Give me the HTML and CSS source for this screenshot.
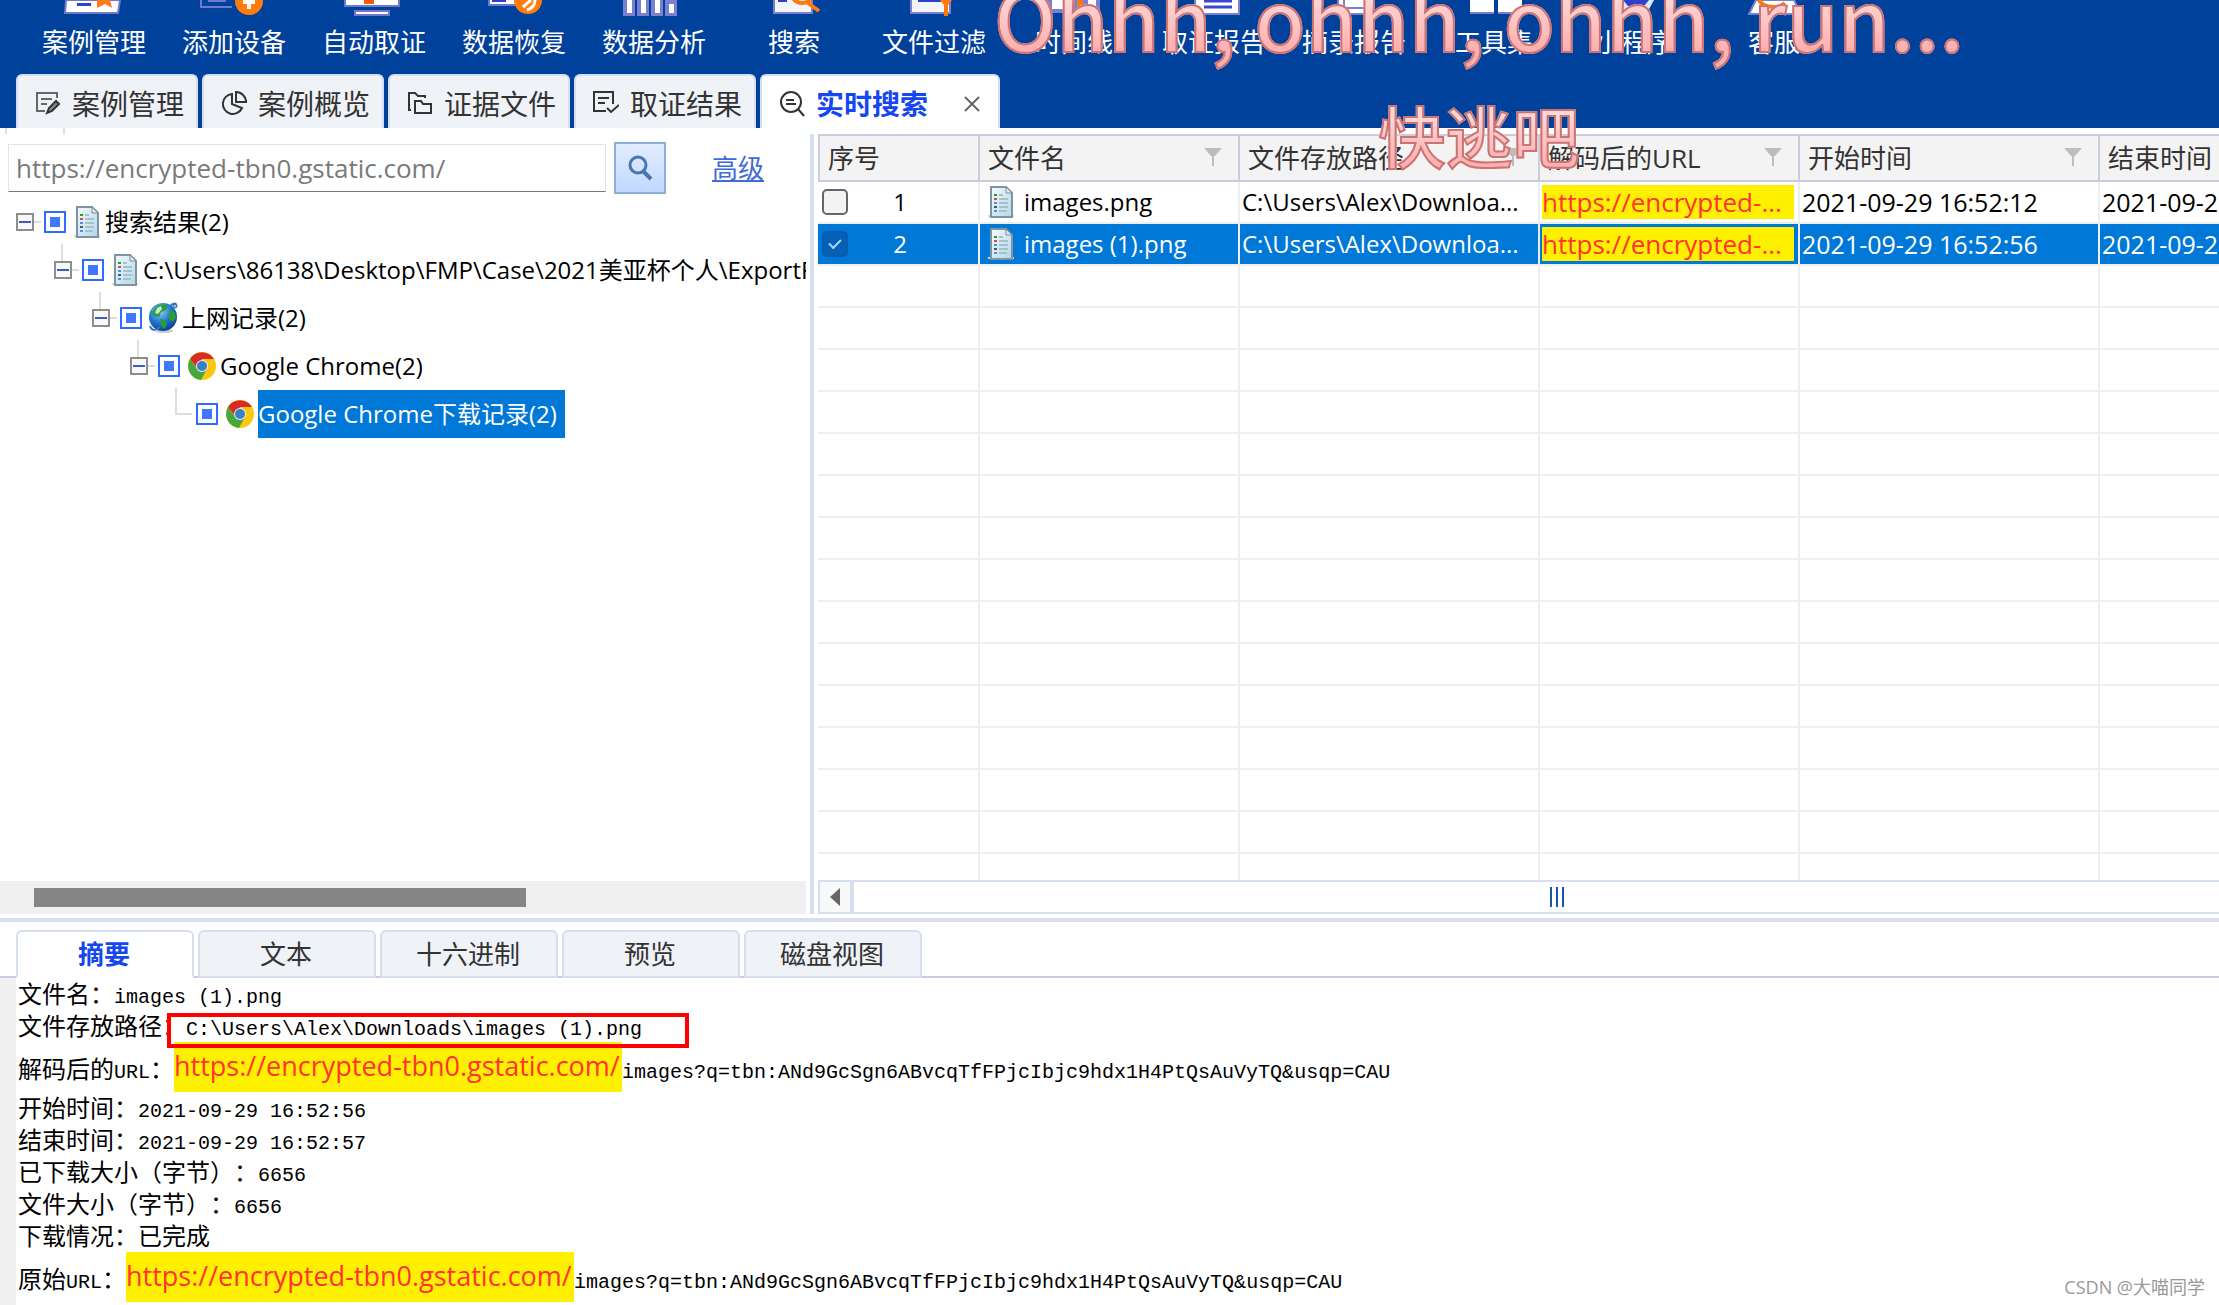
FILE: index.html
```html
<!DOCTYPE html>
<html lang="zh-CN">
<head>
<meta charset="utf-8">
<title>实时搜索</title>
<link rel="stylesheet" href="styles.css">
</head>
<body>
<svg class="defs" width="0" height="0" aria-hidden="true">
  <defs>
    <linearGradient id="paper" x1="0" y1="0" x2="1" y2="1"><stop offset="0" stop-color="#f4fafd"/><stop offset="1" stop-color="#b4d7e8"/></linearGradient>
    <radialGradient id="sea" cx=".4" cy=".3" r=".8"><stop offset="0" stop-color="#8fd0f5"/><stop offset=".5" stop-color="#1f78d0"/><stop offset="1" stop-color="#0a2f8a"/></radialGradient>
  </defs>
  <symbol id="doc" viewBox="0 0 26 32">
    <rect x="0" y="29" width="26" height="2" fill="#d5d9dc"/>
    <path d="M3 1h15l6 6v24H3z" fill="url(#paper)" stroke="#7d94a3" stroke-width="2"/>
    <path d="M18 1v6h6z" fill="#dfeaf1" stroke="#7d8b96"/>
    <path d="M11 9h4M11 13h9M11 17h9M11 21h9M11 25h8" stroke="#a3c3cc" stroke-width="2"/>
    <path d="M6 8h3v2H6z" fill="#1fa01f"/><path d="M6 12h3v2H6z" fill="#d04a4a"/><path d="M6 16h3v2H6zM6 24h3v2H6z" fill="#4a8dff"/><path d="M6 20h3v2H6z" fill="#555"/>
  </symbol>
  <symbol id="globe" viewBox="0 0 30 32">
    <ellipse cx="16" cy="29" rx="9" ry="2" fill="#c9cdd2"/>
    <circle cx="15" cy="15" r="14" fill="url(#sea)"/>
    <path d="M8 5c4-3 9-3 12-1l-2 4-5 2-2 5-5-1-2-3zM20 12l4-4 3 3 1 5-3 4-4-3zM12 17l5 1 2 5-3 4-3-3z" fill="#2c9b3c"/>
    <path d="M9 6l4-2 1 3-4 5-3-1z" fill="#c9f0c0"/>
    <path d="M2 24c2 6 6 4 10 1M22 4c3-3 7-4 6 1" fill="none" stroke="#3779b8" stroke-width="2"/>
    <circle cx="27" cy="4" r="2" fill="#8cc3e8" stroke="#28659e"/>
  </symbol>
  <symbol id="chrome" viewBox="0 0 28 28">
    <circle cx="14" cy="14" r="14" fill="#fbc90c"/>
    <path d="M2 7A14 14 0 0 1 26 7H14L9 16z" fill="#da2a26"/>
    <path d="M2 7A14 14 0 0 0 13 28L19 17H9z" fill="#43a83f"/>
    <circle cx="14" cy="14" r="6" fill="#e4eef6"/><circle cx="14" cy="14" r="5" fill="#3b7fc4"/>
  </symbol>
  <symbol id="funnel" viewBox="0 0 18 18"><path d="M0 0h18l-7 8H10v10H8V8H7z" fill="#bdbdbd"/></symbol>
</svg>

<header class="top">
  <nav class="toolbar" aria-label="工具栏">
    <button class="tool" type="button"><svg viewBox="0 0 60 16"><path d="M1 0L0 13H53L55 0z" transform="translate(1)" fill="#fff" stroke="#6f78cc" stroke-width="2"/><path d="M13 3h14v3H13z" fill="#2f3fd0"/><path d="M33 0h13l2 8-7-4-8 4z" fill="#ff7a1a"/></svg>案例管理</button>
    <button class="tool" type="button"><svg viewBox="0 0 60 16"><path d="M-3 0V7H28" fill="none" stroke="#6f78cc" stroke-width="2"/><path d="M4 1h18" stroke="#6f78cc" stroke-width="2"/><circle cx="45" cy="1" r="14" fill="#ff7d0a"/><path d="M43 0h4v9h-4zM39 0h12v4H39z" fill="#fff"/></svg>添加设备</button>
    <button class="tool" type="button"><svg viewBox="0 0 60 16"><path d="M1-2V6H55V-2z" fill="#fff" stroke="#6f78cc" stroke-width="2"/><path d="M20 0h10v4H20z" fill="#ff5a00"/><path d="M11 11h34v4H11z" fill="#fff" stroke="#6f78cc" stroke-width="2"/></svg>自动取证</button>
    <button class="tool" type="button"><svg viewBox="0 0 60 16"><path d="M5-2V5H34V-2z" fill="#fff" stroke="#6f78cc" stroke-width="2"/><path d="M8 0h14v2H8z" fill="#2f3fd0"/><circle cx="44" cy="0" r="14" fill="#ff7d0a"/><path d="M39 7l8-7M43 10c6-2 8-5 8-10" fill="none" stroke="#fff" stroke-width="3"/></svg>数据恢复</button>
    <button class="tool" type="button"><svg viewBox="0 0 60 16"><path d="M-1 0h12v16H-1zM13 0h12v16H13zM27 0h12v16H27zM41 0h12v16H41z" fill="#7a80cf"/><path d="M3 0h5v13H3zM17 0h5v13h-5zM31 0h5v13h-5zM45 4h5v9h-5z" fill="#fff"/></svg>数据分析</button>
    <button class="tool" type="button"><svg viewBox="0 0 60 16"><path d="M10-2V13H48V-2z" fill="#f4f4fb" stroke="#7a80cf" stroke-width="2"/><path d="M14 0h9v2h-9z" fill="#2f3fd0"/><path d="M29-2a10 9 0 0 0 18 0M44 3l11 8" fill="none" stroke="#ff7a0a" stroke-width="4"/></svg>搜索</button>
    <button class="tool" type="button"><svg viewBox="0 0 60 16"><path d="M7-2V13H46V-2z" fill="#f4f4fb" stroke="#7a80cf" stroke-width="2"/><path d="M14 0h23v2H14z" fill="#2f3fd0"/><path d="M36 0h12l-4 5v11h-4V5z" fill="#ff7a0a"/></svg>文件过滤</button>
    <button class="tool" type="button"><svg viewBox="0 0 60 16"><path d="M2 0h54v13H2z" fill="#7a80cf"/><path d="M8 0h12v9H8zM44 0h8v9h-8z" fill="#fff"/><path d="M33 0h6v6h-6z" fill="#ff7a0a"/></svg>时间线</button>
    <button class="tool" type="button"><svg viewBox="0 0 60 16"><path d="M11-2V14H55V-2z" fill="#fff" stroke="#7a80cf" stroke-width="2"/><path d="M20 1h28M20 7h28" stroke="#3b48d0" stroke-width="3"/></svg>取证报告</button>
    <button class="tool" type="button"><svg viewBox="0 0 60 16"><path d="M14-2V14H50V-2z" fill="#fff" stroke="#7a80cf" stroke-width="2"/><path d="M20 0v8h25V0" fill="none" stroke="#7a80cf" stroke-width="2"/></svg>摘录报告</button>
    <button class="tool" type="button"><svg viewBox="0 0 60 16"><path d="M6 0h24v13H6zM34 0h24v13H34z" fill="#fff"/><path d="M6 13h24M34 13h24" stroke="#7a80cf" stroke-width="2"/></svg>工具集</button>
    <button class="tool" type="button"><svg viewBox="0 0 60 16"><path d="M14 0h36l-7 13-6-5-5 5-5-5-7 5z" fill="#d8e8f6"/><path d="M19 0h26l-5 6H24z" fill="#2f3fd0"/></svg>小程序</button>
    <button class="tool" type="button"><svg viewBox="0 0 60 16"><path d="M12 0L5 14H57L50 0z" fill="#fff" stroke="#7a80cf" stroke-width="2"/><path d="M15 0c4 8 20 9 26 3" fill="none" stroke="#ff7a0a" stroke-width="4"/></svg>客服</button>
  </nav>
  <nav class="tabs" aria-label="页面">
    <button class="tab" type="button"><svg viewBox="0 0 26 26"><path d="M10 20H2V2h20v5" fill="none" stroke="#666" stroke-width="2"/><path d="M6 8h11M6 13h6" stroke="#666" stroke-width="2"/><path d="M12 22l2-5 7-7 3 3-7 7z" fill="#888" stroke="#333" stroke-width="2"/></svg>案例管理</button>
    <button class="tab" type="button"><svg viewBox="0 0 26 26"><path d="M11 3a10 10 0 1 0 10 14l-10-4z" fill="none" stroke="#333" stroke-width="2"/><path d="M15 1v10h10A10 10 0 0 0 15 1z" fill="none" stroke="#333" stroke-width="2"/></svg>案例概览</button>
    <button class="tab" type="button"><svg viewBox="0 0 26 26"><path d="M4 19H2V2h6l3 3h7v2" fill="none" stroke="#333" stroke-width="2"/><path d="M8 10h6l2 3h8v9H8z" fill="none" stroke="#333" stroke-width="2"/></svg>证据文件</button>
    <button class="tab" type="button"><svg viewBox="0 0 26 26"><path d="M13 20H1V1h19v12M5 7h11M5 12h7M14 17l4 4 8-7" fill="none" stroke="#333" stroke-width="2"/></svg>取证结果</button>
    <button class="tab tab-current" type="button" aria-current="page"><svg viewBox="0 0 26 26"><circle cx="12" cy="11" r="10" fill="none" stroke="#333" stroke-width="2"/><path d="M7 9h8M7 13h10M19 18l6 7" stroke="#333" stroke-width="2"/></svg>实时搜索<svg class="close" viewBox="0 0 16 16"><path d="M1 1l14 14M15 1L1 15" stroke="#666" stroke-width="2"/></svg></button>
  </nav>
</header>

<main class="work">
  <section class="side">
    <div class="notch"></div>
    <form class="search">
      <input class="query" type="text" aria-label="搜索内容" value="https://encrypted-tbn0.gstatic.com/">
      <button class="go" type="button" aria-label="搜索"><svg viewBox="0 0 26 26"><circle cx="11" cy="10" r="8" fill="none" stroke="#4c76ae" stroke-width="3"/><path d="M16 16l8 8" stroke="#4c76ae" stroke-width="4"/></svg></button>
      <a class="advanced" href="#">高级</a>
    </form>
    <ul class="tree">
      <li>
        <div class="node"><button class="fold" type="button" aria-label="折叠"></button><input class="part" type="checkbox" id="n1"><svg class="pic"><use href="#doc"/></svg><label for="n1">搜索结果(2)</label></div>
        <ul>
          <li>
            <div class="node"><button class="fold" type="button" aria-label="折叠"></button><input class="part" type="checkbox" id="n2"><svg class="pic"><use href="#doc"/></svg><label for="n2">C:\Users\86138\Desktop\FMP\Case\2021美亚杯个人\ExportFile</label></div>
            <ul>
              <li>
                <div class="node"><button class="fold" type="button" aria-label="折叠"></button><input class="part" type="checkbox" id="n3"><svg class="pic pic-globe"><use href="#globe"/></svg><label for="n3">上网记录(2)</label></div>
                <ul>
                  <li>
                    <div class="node"><button class="fold" type="button" aria-label="折叠"></button><input class="part" type="checkbox" id="n4"><svg class="pic pic-chrome"><use href="#chrome"/></svg><label for="n4">Google Chrome(2)</label></div>
                    <ul>
                      <li>
                        <div class="node leaf"><span class="elbow"></span><input class="part" type="checkbox" id="n5"><svg class="pic pic-chrome"><use href="#chrome"/></svg><label class="chosen" for="n5">Google Chrome下载记录(2)</label></div>
                      </li>
                    </ul>
                  </li>
                </ul>
              </li>
            </ul>
          </li>
        </ul>
      </li>
    </ul>
    <div class="side-scroll"><div class="side-thumb"></div></div>
  </section>
  <div class="splitter"></div>
  <section class="results">
    <div class="grid-view">
      <table class="grid">
        <colgroup><col class="c-num"><col class="c-name"><col class="c-path"><col class="c-url"><col class="c-time"><col class="c-time"></colgroup>
        <thead>
          <tr>
            <th><div class="head">序号</div></th>
            <th><div class="head">文件名<svg class="filter"><use href="#funnel"/></svg></div></th>
            <th><div class="head">文件存放路径<svg class="filter"><use href="#funnel"/></svg></div></th>
            <th><div class="head">解码后的URL<svg class="filter"><use href="#funnel"/></svg></div></th>
            <th><div class="head">开始时间<svg class="filter"><use href="#funnel"/></svg></div></th>
            <th><div class="head">结束时间<svg class="filter"><use href="#funnel"/></svg></div></th>
          </tr>
        </thead>
        <tbody>
          <tr>
            <td><div class="pick"><input class="tick" type="checkbox" id="r1"><label for="r1">1</label></div></td>
            <td><div class="file"><svg class="pic"><use href="#doc"/></svg>images.png</div></td>
            <td>C:\Users\Alex\Downloa...</td>
            <td><mark class="hit">https://encrypted-...</mark></td>
            <td class="when">2021-09-29 16:52:12</td>
            <td class="when">2021-09-29 16:52:13</td>
          </tr>
          <tr class="row-current">
            <td><div class="pick"><input class="tick" type="checkbox" id="r2" checked><label for="r2">2</label></div></td>
            <td><div class="file"><svg class="pic"><use href="#doc"/></svg>images (1).png</div></td>
            <td>C:\Users\Alex\Downloa...</td>
            <td><mark class="hit">https://encrypted-...</mark></td>
            <td class="when">2021-09-29 16:52:56</td>
            <td class="when">2021-09-29 16:52:57</td>
          </tr>
          <tr><td></td><td></td><td></td><td></td><td></td><td></td></tr>
          <tr><td></td><td></td><td></td><td></td><td></td><td></td></tr>
          <tr><td></td><td></td><td></td><td></td><td></td><td></td></tr>
          <tr><td></td><td></td><td></td><td></td><td></td><td></td></tr>
          <tr><td></td><td></td><td></td><td></td><td></td><td></td></tr>
          <tr><td></td><td></td><td></td><td></td><td></td><td></td></tr>
          <tr><td></td><td></td><td></td><td></td><td></td><td></td></tr>
          <tr><td></td><td></td><td></td><td></td><td></td><td></td></tr>
          <tr><td></td><td></td><td></td><td></td><td></td><td></td></tr>
          <tr><td></td><td></td><td></td><td></td><td></td><td></td></tr>
          <tr><td></td><td></td><td></td><td></td><td></td><td></td></tr>
          <tr><td></td><td></td><td></td><td></td><td></td><td></td></tr>
          <tr><td></td><td></td><td></td><td></td><td></td><td></td></tr>
          <tr><td></td><td></td><td></td><td></td><td></td><td></td></tr>
          <tr><td></td><td></td><td></td><td></td><td></td><td></td></tr>
        </tbody>
      </table>
    </div>
    <div class="grid-scroll">
      <button class="scroll-left" type="button" aria-label="向左滚动"><svg viewBox="0 0 10 18"><path d="M10 0v18L0 9z" fill="#666"/></svg></button>
      <div class="track"><span class="grip"></span></div>
    </div>
  </section>
</main>

<section class="detail">
  <nav class="views" aria-label="视图">
    <button class="view view-current" type="button">摘要</button>
    <button class="view" type="button">文本</button>
    <button class="view" type="button">十六进制</button>
    <button class="view" type="button">预览</button>
    <button class="view" type="button">磁盘视图</button>
  </nav>
  <div class="summary">
    <p>文件名：<code>images (1).png</code></p>
    <p class="boxed">文件存放路径：<code>C:\Users\Alex\Downloads\images (1).png</code></p>
    <p class="tall"><span>解码后的<code>URL</code>：</span><mark>https://encrypted-tbn0.gstatic.com/</mark><code>images?q=tbn:ANd9GcSgn6ABvcqTfFPjcIbjc9hdx1H4PtQsAuVyTQ&amp;usqp=CAU</code></p>
    <p>开始时间：<code>2021-09-29 16:52:56</code></p>
    <p>结束时间：<code>2021-09-29 16:52:57</code></p>
    <p>已下载大小（字节）：<code>6656</code></p>
    <p>文件大小（字节）：<code>6656</code></p>
    <p>下载情况：已完成</p>
    <p class="tall"><span>原始<code>URL</code>：</span><mark>https://encrypted-tbn0.gstatic.com/</mark><code>images?q=tbn:ANd9GcSgn6ABvcqTfFPjcIbjc9hdx1H4PtQsAuVyTQ&amp;usqp=CAU</code></p>
  </div>
</section>

<div class="lyrics">
  <div class="lyric">Ohhh, ohhh, ohhh, run...</div>
  <div class="lyric lyric-sub">快逃吧</div>
</div>
<div class="credit">CSDN @大喵同学</div>
</body>
</html>
```
FILE: styles.css
```css
*, *::before, *::after { box-sizing: border-box; }
body {
  margin: 0;
  min-height: 100vh;
  display: flex;
  flex-direction: column;
  position: relative;
  overflow: hidden;
  background: #fff;
  color: #000;
  font: 24px/40px "Open Sans", "Noto Sans CJK SC", sans-serif;
}
button { margin: 0; padding: 0; border: 0; background: none; font: inherit; color: inherit; }
ul { margin: 0; padding: 0; list-style: none; }
.defs { position: absolute; }

/* Top bar */
.top { background: #00419c; }
.toolbar { display: flex; padding-left: 24px; }
.tool {
  flex: 0 0 140px;
  display: flex;
  flex-direction: column;
  align-items: center;
  color: #fff;
  font-size: 26px;
  line-height: 52px;
}
.tool svg { width: 60px; height: 16px; overflow: visible; }
.tabs { display: flex; gap: 4px; padding: 6px 16px 0; }
.tab {
  display: flex;
  align-items: center;
  gap: 11px;
  width: 182px;
  height: 54px;
  padding: 4px 0 0 17px;
  border: 2px solid #d6dff1;
  border-bottom: 0;
  border-radius: 6px 6px 0 0;
  background: #eff2f7;
  color: #333;
  font-size: 28px;
  white-space: nowrap;
}
.tab svg { flex: none; width: 26px; height: 26px; }
.tab-current { width: 240px; background: #fff; color: #1447f0; font-weight: 700; }
.tab .close { width: 16px; height: 16px; margin-left: 25px; }

/* Work area */
.work {
  flex: 1 1 0;
  min-height: 0;
  display: grid;
  grid-template-columns: 806px 12px minmax(0, 1fr);
  padding-bottom: 4px;
}
.side { display: flex; flex-direction: column; min-width: 0; min-height: 0; overflow: hidden; }
.notch { width: 60px; height: 6px; margin-left: 5px; border: solid #d6dff1; border-width: 0 2px; }
.search { display: flex; align-items: center; gap: 8px; padding: 8px 8px 4px; }
.query {
  width: 598px;
  height: 48px;
  padding: 0 7px;
  border: 1px solid #e5e5e5;
  border-bottom-color: #777;
  font: 26px/40px "Open Sans", "Noto Sans CJK SC", sans-serif;
  color: #7a7a7a;
}
.go {
  display: grid;
  place-items: center;
  width: 52px;
  height: 52px;
  border: 2px solid #8fb0d5;
  background: linear-gradient(#e2edff, #c1d9ff);
}
.go svg { width: 26px; height: 26px; }
.advanced { margin-left: 38px; color: #3f6cd8; font-size: 26px; text-underline-offset: 2px; }

.tree { flex: 1; min-height: 0; padding-left: 16px; white-space: nowrap; }
.tree ul { padding-left: 38px; }
.node { position: relative; display: flex; align-items: center; height: 48px; }
.tree ul .node::before {
  content: "";
  position: absolute;
  left: 7px;
  top: -2px;
  width: 2px;
  height: 18px;
  background: #ddd;
}
.tree ul .leaf::before { height: 26px; }
.fold {
  position: relative;
  flex: none;
  width: 18px;
  height: 18px;
  margin-right: 10px;
  border: 2px solid #8d8d8d;
  background: linear-gradient(#3f5fb5, #3f5fb5) center / 12px 2px no-repeat #f8f8f8;
}
.fold::after { content: ""; position: absolute; left: 16px; top: 6px; width: 7px; height: 2px; background: #ddd; }
.elbow { flex: none; width: 17px; height: 2px; margin: 0 4px 0 7px; background: #ddd; }
.part {
  appearance: none;
  flex: none;
  width: 22px;
  height: 22px;
  margin: 0 8px 0 0;
  border: 2px solid #2f6bff;
  background: linear-gradient(#3f78ff, #3f78ff) center / 10px 10px no-repeat #fff;
}
.pic { flex: none; width: 26px; height: 32px; margin-right: 5px; }
.pic-chrome { width: 28px; height: 28px; margin-right: 4px; }
.pic-globe { width: 30px; margin: 0 4px 0 -2px; }
.node label { height: 48px; line-height: 48px; }
.chosen { padding-right: 8px; background: #0078d7; color: #fff; }

.side-scroll { height: 33px; padding: 7px 34px; background: #f0f0f0; }
.side-thumb { width: 492px; height: 19px; background: #858585; }
.splitter { width: 4px; margin: 6px 4px 0; background: #d6dff1; }

/* Results */
.results { display: flex; flex-direction: column; min-height: 0; padding-top: 6px; }
.grid-view { flex: 1 1 0; min-height: 0; overflow: hidden; }
.grid { width: 1582px; table-layout: fixed; border-collapse: separate; border-spacing: 0; }
.c-num { width: 162px; }
.c-name, .c-url { width: 260px; }
.c-path, .c-time { width: 300px; }
.grid th {
  height: 48px;
  padding: 0 16px 0 8px;
  border: solid #ccccdd;
  border-width: 2px 2px 2px 0;
  background: #f3f3f3;
  color: #333;
  font-size: 26px;
  font-weight: 400;
  text-align: left;
}
.grid th:first-child { border-left-width: 2px; }
.head { display: flex; justify-content: space-between; }
.filter { width: 18px; height: 18px; margin-top: 10px; }
.grid td {
  height: 42px;
  padding: 0 2px;
  border: solid #eee;
  border-width: 0 2px 2px 0;
  white-space: nowrap;
  overflow: hidden;
}
.grid .when { font-size: 25px; }
.row-current td { background: #0078d7; color: #fff; }
.pick { display: flex; align-items: center; padding-left: 2px; }
.pick label { width: 104px; text-align: center; }
.tick {
  appearance: none;
  width: 26px;
  height: 26px;
  margin: 0;
  border: 2px solid #666;
  border-radius: 5px;
  background: #f3f3f3;
}
.tick:checked {
  display: grid;
  place-items: center;
  border-color: #0a5cae;
  background: #0560b8;
}
.tick:checked::before {
  content: "";
  width: 12px;
  height: 7px;
  margin-bottom: 4px;
  border: solid #a8d4f8;
  border-width: 0 0 2px 2px;
  transform: rotate(-45deg);
}
.file { display: flex; align-items: center; gap: 5px; padding-left: 6px; }
.hit { display: block; height: 34px; margin-right: 2px; background: #fff000; color: #f33; font-size: 26px; line-height: 34px; }
.grid-scroll { display: flex; height: 34px; border: solid #d6dff1; border-width: 2px 0 2px 2px; }
.scroll-left { display: grid; place-items: center; width: 34px; border-right: 4px solid #d6dff1; background: #f8f9fb; }
.scroll-left svg { width: 10px; height: 18px; }
.track { flex: 1; display: grid; place-items: center; padding-left: 40px; }
.grip {
  width: 14px;
  height: 20px;
  background: repeating-linear-gradient(90deg, #1a56a8 0 2px, #fff 2px 6px);
}

/* Detail */
.detail { border-top: 4px solid #d6dff1; }
.views { display: flex; gap: 4px; margin-top: 8px; padding-left: 16px; border-bottom: 2px solid #ccccdd; }
.view {
  width: 178px;
  height: 48px;
  margin-bottom: -2px;
  padding-right: 2px;
  border: 2px solid #d6dff1;
  border-radius: 6px 6px 0 0;
  background: #eff2f7;
  color: #333;
  font-size: 26px;
}
.view-current { border-bottom-color: #fff; background: #fff; color: #1447f0; font-weight: 700; }
.summary {
  padding: 0 0 3px 2px;
  border-left: 16px solid #f0f0f0;
  font-family: "Noto Sans CJK SC", sans-serif;
  line-height: 30px;
  text-spacing-trim: space-all;
}
.summary p { height: 32px; margin: 0; white-space: nowrap; }
.summary code { font: 20px/30px "Liberation Mono", monospace; }
.summary .tall { display: flex; align-items: flex-end; height: 50px; line-height: 38px; }
.summary .tall code { line-height: 38px; }
.summary mark {
  width: 448px;
  height: 50px;
  background: #fff000;
  color: #f33;
  font: 27px/48px "Open Sans", sans-serif;
}
.boxed { position: relative; }
.boxed::after {
  content: "";
  position: absolute;
  left: 149px;
  top: 3px;
  width: 522px;
  height: 35px;
  border: 4px solid #f00;
}

/* Overlays */
.lyrics {
  position: absolute;
  left: 994px;
  top: -40px;
  display: flex;
  flex-direction: column;
  align-items: center;
  gap: 12px;
  pointer-events: none;
}
.lyric {
  font: 500 83px/112px "Noto Sans CJK SC", sans-serif;
  white-space: nowrap;
  color: transparent;
  background: linear-gradient(#ffe0e0 20%, #ffb0b0 80%);
  background-clip: text;
  -webkit-background-clip: text;
  -webkit-text-stroke: 2px #cc7474;
}
.lyric-sub { font-size: 67px; line-height: 100px; }
.credit { position: absolute; right: 14px; bottom: 4px; color: #999; font-size: 18px; line-height: 28px; }
```
